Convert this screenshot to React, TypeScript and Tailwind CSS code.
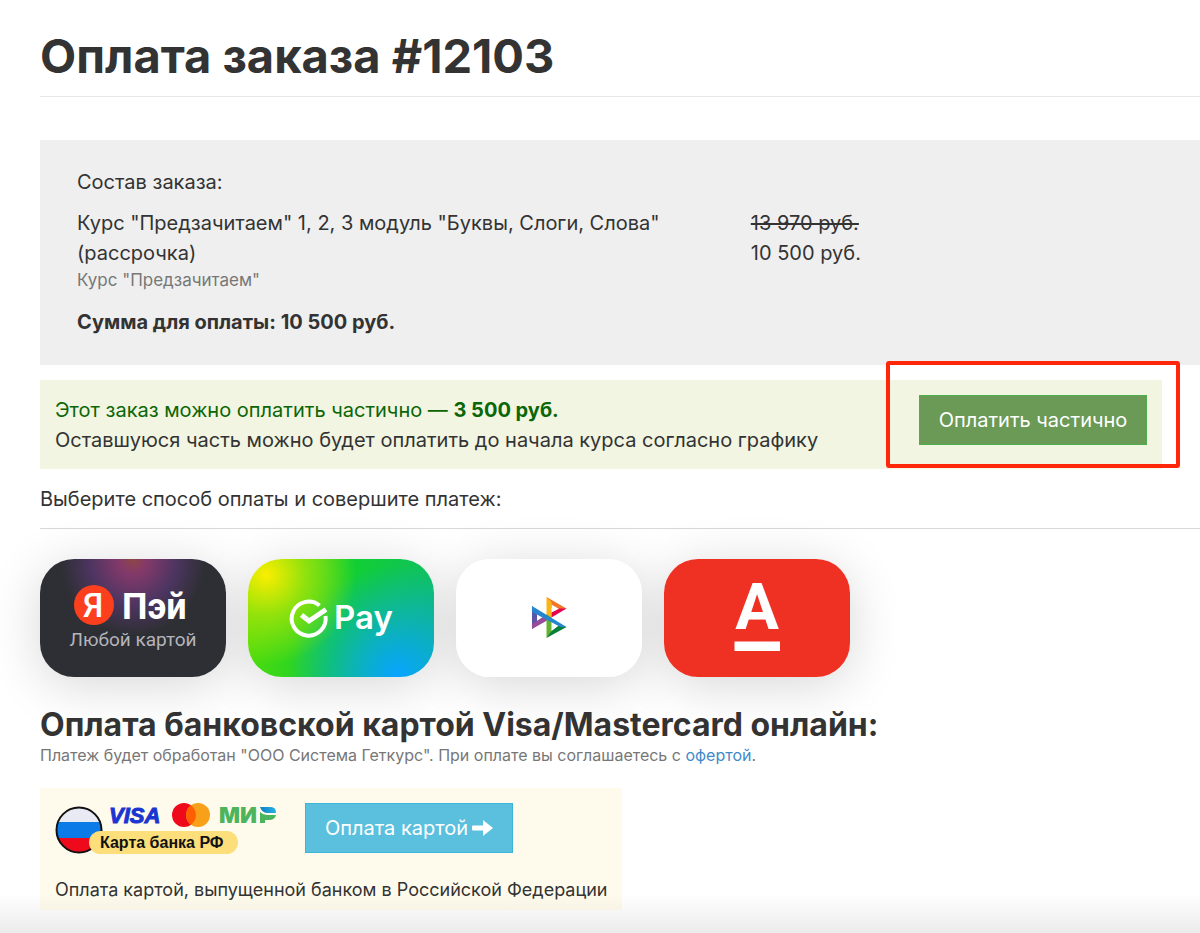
import type { ReactNode } from "react";

type PaymentMethod = {
    id: string;
    label: string;
    background: string;
    logo: ReactNode;
};

function YandexPayLogo() {
    return (
        <svg viewBox="0 0 186 118" className="block w-full">
            <circle cx="54" cy="46" r="20" fill="#fc3f1d" />
            <text x="53" y="58" textAnchor="middle" fontSize="33" fontWeight="500" fill="#fff" className="font-['Roboto',sans-serif]">
                Я
            </text>
            <text x="82" y="60" fontSize="36" fontWeight="700" fill="#fff" className="font-['Roboto',sans-serif]">
                Пэй
            </text>
            <text x="93" y="87" textAnchor="middle" fontSize="19" fill="#b4b4ba" className="font-['Roboto',sans-serif]">
                Любой картой
            </text>
        </svg>
    );
}

function SberPayLogo() {
    return (
        <svg viewBox="0 0 186 118" className="block w-full">
            <path d="M71.500 46.500A17 17 0 1 0 77.500 57" fill="none" stroke="#fff" strokeWidth="4" />
            <path d="M53.500 56l7.500 6 17-11.500" fill="none" stroke="#fff" strokeWidth="5" />
            <text x="86" y="70" fontSize="33" fontWeight="600" fill="#fff" className="font-['Inter',sans-serif]">
                Pay
            </text>
        </svg>
    );
}

function BillingLogo() {
    return (
        <svg viewBox="0 0 186 118" className="block w-full">
            <path d="M90.500 38l20 11.500-5 2-10-6v4z" fill="#f07628" />
            <path d="M90.500 38l5 5v17l-5-3z" fill="#fbb616" />
            <path d="M110.500 49.500l-15 9v-5l8-4z" fill="#e5044f" />
            <path d="M76 47l5 5v14l-5 4z" fill="#5b57a6" />
            <path d="M76 70v-5l11-7 5 3z" fill="#984a9c" />
            <path d="M90.500 55l5 4v15l-5 5z" fill="#64b32e" />
            <path d="M90.500 79l20-11-7-2-8 6z" fill="#07803c" />
            <path d="M76 47l34.500 21h-6L76 53z" fill="#2585cf" />
        </svg>
    );
}

function AlfaLogo() {
    return (
        <svg viewBox="0 0 186 118" className="block w-full">
            <text x="93" y="70" textAnchor="middle" fontSize="65" fontWeight="700" fill="#fff" className="font-['Roboto',sans-serif]">
                А
            </text>
            <rect x="70.500" y="82.500" width="45.500" height="9.500" fill="#fff" />
        </svg>
    );
}

function CardBrandsLogo() {
    return (
        <svg viewBox="0 0 222 52" className="block w-[222px]" role="img" aria-label="Карта банка РФ">
            <defs>
                <clipPath id="flag">
                    <circle cx="24" cy="27" r="22.500" />
                </clipPath>
                <linearGradient id="mir" x1="0" x2="1">
                    <stop offset="0" stopColor="#0d7fc4" />
                    <stop offset="1" stopColor="#27b0e6" />
                </linearGradient>
            </defs>
            <g clipPath="url(#flag)">
                <rect width="48" height="19" fill="#e9eaf3" />
                <rect y="19" width="48" height="16" fill="#0b7be8" />
                <rect y="35" width="48" height="17" fill="#ee0a1b" />
            </g>
            <circle cx="24" cy="27" r="22.500" fill="none" stroke="#111" strokeWidth="2" />
            <text
                x="54"
                y="20"
                fontSize="22"
                fontWeight="700"
                fontStyle="italic"
                fill="#1a35d0"
                stroke="#1a35d0"
                className="font-['Liberation_Sans',sans-serif]"
            >
                VISA
            </text>
            <circle cx="129" cy="12" r="12" fill="#ee0a1b" />
            <circle cx="143" cy="12" r="12" fill="#f9a01b" />
            <path d="M136 2.300a12 12 0 0 1 0 19.400a12 12 0 0 1 0-19.400z" fill="#ff5f00" />
            <text x="164" y="20" fontSize="22" fontWeight="900" fill="#4db45e" className="font-['Inter',sans-serif]">
                МИ
            </text>
            <path d="M205 4h11q5 0 5 6h-8q-6 0-8-6z" fill="url(#mir)" />
            <path d="M205 9q3 3 8 3h8q-1 5-7 5h-4v3h-5z" fill="#4db45e" />
            <rect x="34" y="28" width="149" height="23" rx="11.500" fill="#fcde7a" />
            <text x="45" y="45" fontSize="16" fontWeight="700" fill="#111" className="font-['Liberation_Sans',sans-serif]">
                Карта банка РФ
            </text>
        </svg>
    );
}

const paymentMethods: PaymentMethod[] = [
    {
        id: "yandex",
        label: "Я Пэй, любой картой",
        background: "bg-[#2e2f34] bg-[radial-gradient(ellipse_72px_76px_at_50%_0%,#8d4646_0%,#83396a_20%,#4d3561_60%,#2e2f34_100%)]",
        logo: <YandexPayLogo />,
    },
    {
        id: "sber",
        label: "SberPay",
        background:
            "bg-[radial-gradient(circle_90px_at_18px_16px,#fbee00_0%,#a5e40acc_45%,#22d60a00_100%),radial-gradient(circle_110px_at_150px_116px,#08a4ff_0%,#08a4ffaa_35%,#0fbd6a00_100%),linear-gradient(100deg,#5ade05_0%,#12cf31_50%,#0fbd6a_100%)]",
        logo: <SberPayLogo />,
    },
    { id: "billing", label: "Оплата через банк", background: "bg-white", logo: <BillingLogo /> },
    { id: "alfa", label: "Альфа-Банк", background: "bg-[#ef3124]", logo: <AlfaLogo /> },
];

function OrderSummary() {
    return (
        <section className="bg-[#efefef] pt-[27px] pb-7 pl-[37px]">
            <p>Состав заказа:</p>
            <table className="mt-[11px] w-full text-left">
                <tbody>
                    <tr className="align-top">
                        <td className="w-3/5 pr-20">
                            <div>Курс "Предзачитаем" 1, 2, 3 модуль "Буквы, Слоги, Слова" (рассрочка)</div>
                            <div className="text-[17px] leading-6 text-[#777]">Курс "Предзачитаем"</div>
                        </td>
                        <td>
                            <del className="block">13 970 руб.</del>
                            <div>10 500 руб.</div>
                        </td>
                    </tr>
                </tbody>
            </table>
            <p className="mt-[15px] font-bold">Сумма для оплаты: 10 500 руб.</p>
        </section>
    );
}

function PartialPayment() {
    return (
        <section className="relative mt-[15px] mr-[38px] flex items-start justify-between bg-[#f2f5e1] px-[15px] pt-[15px] pb-[14px]">
            <div>
                <p className="text-[#0b6606]">
                    Этот заказ можно оплатить частично — <b>3 500 руб.</b>
                </p>
                <p>Оставшуюся часть можно будет оплатить до начала курса согласно графику</p>
            </div>
            <button type="button" className="h-[50px] w-[228px] shrink-0 border border-[#4cae4c] bg-[#6a9a56] text-white">
                Оплатить частично
            </button>
            {/* highlight around the button */}
            <div className="pointer-events-none absolute -top-[19px] -right-[18px] h-[107px] w-[294px] rounded-[3px] border-4 border-[#ff260a]" />
        </section>
    );
}

export default function App() {
    return (
        <main className="relative min-h-screen overflow-hidden bg-white pb-6 pl-10 font-['Inter','Liberation_Sans',sans-serif] text-[20px] leading-[30px] text-[#333]">
            <h1 className="border-b border-[#e7e7e7] pt-7 pb-3 text-[47px] leading-14 font-bold">Оплата заказа #12103</h1>

            <div className="mt-[43px]">
                <OrderSummary />
            </div>
            <PartialPayment />

            <p className="mt-[15px] border-b border-[#d8d8d8] pb-[14px]">Выберите способ оплаты и совершите платеж:</p>

            <div className="mt-[30px] flex flex-wrap gap-[22px]">
                {paymentMethods.map((method) => (
                    <button
                        key={method.id}
                        type="button"
                        aria-label={method.label}
                        className="w-[186px] rounded-[34px] shadow-[0_8px_52px_rgba(0,0,0,0.16)]"
                    >
                        <span className={`relative z-10 block overflow-hidden rounded-[34px] ${method.background}`}>{method.logo}</span>
                    </button>
                ))}
            </div>

            <h2 className="mt-[30px] text-[32px] leading-9 font-bold">Оплата банковской картой Visa/Mastercard онлайн:</h2>
            <p className="text-[16px] leading-6 text-[#777]">
                Платеж будет обработан "ООО Система Геткурс". При оплате вы соглашаетесь с{" "}
                <a href="#offer" className="text-[#428bca]">
                    офертой
                </a>
                .
            </p>

            <section className="mt-[21px] w-fit bg-[#fffbec] px-[15px] pt-[15px] pb-[7px]">
                <div className="flex items-start gap-7">
                    <CardBrandsLogo />
                    <button
                        type="button"
                        className="flex h-[50px] w-[208px] items-center justify-center gap-1 border border-[#3db5d9] bg-[#5bc0de] text-white"
                    >
                        Оплата картой
                        <svg viewBox="0 0 21 16" className="w-[21px]" fill="currentColor" aria-hidden="true">
                            <path d="M1 5.500h10V0l10 8-10 8v-5.500H1q-1 0-1-1v-3q0-1 1-1z" />
                        </svg>
                    </button>
                </div>
                <p className="mt-[21px] text-[18px] leading-[27px]">Оплата картой, выпущенной банком в Российской Федерации</p>
            </section>

            <div className="pointer-events-none absolute inset-x-0 bottom-0 h-10 bg-linear-to-b from-transparent to-black/8" />
        </main>
    );
}
